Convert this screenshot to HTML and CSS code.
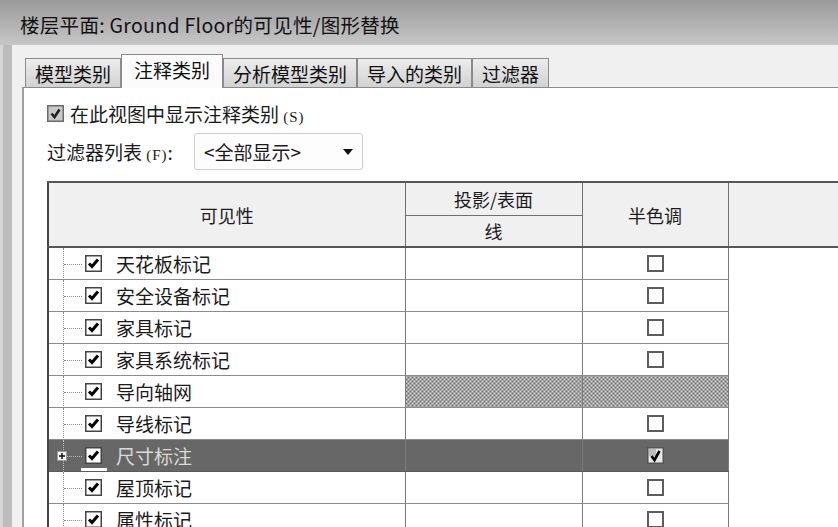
FILE: index.html
```html
<!DOCTYPE html>
<html lang="zh-CN">
<head>
<meta charset="utf-8">
<title>可见性/图形替换</title>
<link rel="stylesheet" href="styles.css">
</head>
<body>
<div class="window">
  <div class="titlebar">楼层平面: Ground Floor的可见性/图形替换</div>
  <div class="frame">
    <div class="frame-edge"></div>
    <div class="dialog">
      <div class="tabs">
        <div class="tab">模型类别</div>
        <div class="tab active">注释类别</div>
        <div class="tab">分析模型类别</div>
        <div class="tab">导入的类别</div>
        <div class="tab">过滤器</div>
      </div>
      <div class="panel">
        <div class="showrow">
          <svg class="cb" viewBox="0 0 17 17"><rect x="0.75" y="0.75" width="15.5" height="15.5" fill="#c9c9c9" stroke="#6a6a6a" stroke-width="1.5"/><path d="M4.5 8.5 L7.5 12 L12.5 4.5" fill="none" stroke="#222" stroke-width="2.6"/></svg>
          <span>在此视图中显示注释类别 <span class="acc">(S)</span></span>
        </div>
        <div class="filterrow">
          <span>过滤器列表 <span class="acc">(F)</span>:</span>
          <div class="select">
            <span>&lt;全部显示&gt;</span>
            <svg class="arrow" viewBox="0 0 10 6"><path d="M0 0 H10 L5 6 Z" fill="#111"/></svg>
          </div>
        </div>
        <table class="vg">
          <colgroup><col class="c-name"><col class="c-line"><col class="c-half"><col class="c-rest"></colgroup>
          <thead>
            <tr class="h1"><th rowspan="2">可见性</th><th>投影/表面</th><th rowspan="2">半色调</th><th rowspan="2" class="rest"></th></tr>
            <tr class="h2"><th>线</th></tr>
          </thead>
          <tbody>
            <tr><td><div class="item"><span class="tree"></span><svg class="cb" viewBox="0 0 17 17"><rect x="0.75" y="0.75" width="15.5" height="15.5" fill="#fff" stroke="#444" stroke-width="1.5"/><path d="M4 8.5 L7 11.5 L13 4.5" fill="none" stroke="#000" stroke-width="3"/></svg><span class="label">天花板标记</span></div></td><td></td><td class="half"><span class="box"></span></td><td class="rest"></td></tr>
            <tr><td><div class="item"><span class="tree"></span><svg class="cb" viewBox="0 0 17 17"><rect x="0.75" y="0.75" width="15.5" height="15.5" fill="#fff" stroke="#444" stroke-width="1.5"/><path d="M4 8.5 L7 11.5 L13 4.5" fill="none" stroke="#000" stroke-width="3"/></svg><span class="label">安全设备标记</span></div></td><td></td><td class="half"><span class="box"></span></td><td class="rest"></td></tr>
            <tr><td><div class="item"><span class="tree"></span><svg class="cb" viewBox="0 0 17 17"><rect x="0.75" y="0.75" width="15.5" height="15.5" fill="#fff" stroke="#444" stroke-width="1.5"/><path d="M4 8.5 L7 11.5 L13 4.5" fill="none" stroke="#000" stroke-width="3"/></svg><span class="label">家具标记</span></div></td><td></td><td class="half"><span class="box"></span></td><td class="rest"></td></tr>
            <tr><td><div class="item"><span class="tree"></span><svg class="cb" viewBox="0 0 17 17"><rect x="0.75" y="0.75" width="15.5" height="15.5" fill="#fff" stroke="#444" stroke-width="1.5"/><path d="M4 8.5 L7 11.5 L13 4.5" fill="none" stroke="#000" stroke-width="3"/></svg><span class="label">家具系统标记</span></div></td><td></td><td class="half"><span class="box"></span></td><td class="rest"></td></tr>
            <tr><td><div class="item"><span class="tree"></span><svg class="cb" viewBox="0 0 17 17"><rect x="0.75" y="0.75" width="15.5" height="15.5" fill="#fff" stroke="#444" stroke-width="1.5"/><path d="M4 8.5 L7 11.5 L13 4.5" fill="none" stroke="#000" stroke-width="3"/></svg><span class="label">导向轴网</span></div></td><td class="hatch"></td><td class="hatch"></td><td class="rest"></td></tr>
            <tr><td><div class="item"><span class="tree"></span><svg class="cb" viewBox="0 0 17 17"><rect x="0.75" y="0.75" width="15.5" height="15.5" fill="#fff" stroke="#444" stroke-width="1.5"/><path d="M4 8.5 L7 11.5 L13 4.5" fill="none" stroke="#000" stroke-width="3"/></svg><span class="label">导线标记</span></div></td><td></td><td class="half"><span class="box"></span></td><td class="rest"></td></tr>
            <tr class="sel"><td><div class="item"><span class="tree"><svg class="plus" viewBox="0 0 10 10"><rect x="0.5" y="0.5" width="9" height="9" fill="#f4f4f4" stroke="#999"/><path d="M2 5 H8 M5 2 V8" stroke="#111" stroke-width="1.5"/></svg></span><svg class="cb" viewBox="0 0 17 17"><rect x="0.75" y="0.75" width="15.5" height="15.5" fill="#fff" stroke="#444" stroke-width="1.5"/><path d="M4 8.5 L7 11.5 L13 4.5" fill="none" stroke="#000" stroke-width="3"/></svg><span class="label">尺寸标注</span><span class="focusbar"></span></div></td><td></td><td class="half"><svg class="cb" viewBox="0 0 17 17"><rect x="0.75" y="0.75" width="15.5" height="15.5" fill="#e6e6e6" stroke="#555" stroke-width="1.5"/><rect x="2" y="2" width="7" height="7" fill="#bdbdbd"/><path d="M4.5 9 L7.5 13 L12.5 4" fill="none" stroke="#000" stroke-width="2.6"/></svg></td><td class="rest"></td></tr>
            <tr><td><div class="item"><span class="tree"></span><svg class="cb" viewBox="0 0 17 17"><rect x="0.75" y="0.75" width="15.5" height="15.5" fill="#fff" stroke="#444" stroke-width="1.5"/><path d="M4 8.5 L7 11.5 L13 4.5" fill="none" stroke="#000" stroke-width="3"/></svg><span class="label">屋顶标记</span></div></td><td></td><td class="half"><span class="box"></span></td><td class="rest"></td></tr>
            <tr><td><div class="item"><span class="tree"></span><svg class="cb" viewBox="0 0 17 17"><rect x="0.75" y="0.75" width="15.5" height="15.5" fill="#fff" stroke="#444" stroke-width="1.5"/><path d="M4 8.5 L7 11.5 L13 4.5" fill="none" stroke="#000" stroke-width="3"/></svg><span class="label">属性标记</span></div></td><td></td><td class="half"><span class="box"></span></td><td class="rest"></td></tr>
          </tbody>
        </table>
      </div>
    </div>
  </div>
</div>
</body>
</html>
```
FILE: styles.css
```css
html, body {
  margin: 0;
  padding: 0;
  width: 838px;
  height: 527px;
  overflow: hidden;
  background: #f0f0f0;
  font-family: "Noto Sans CJK SC", "Noto Sans", sans-serif;
  color: #1a1a1a;
}

.window {
  display: flex;
  flex-direction: column;
  width: 838px;
  height: 527px;
}

.titlebar {
  height: 45px;
  box-sizing: border-box;
  padding: 3px 0 0 20px;
  display: flex;
  align-items: center;
  background: linear-gradient(#9a9a9a, #c6c6c6);
  font-size: 19.5px;
  letter-spacing: 0.3px;
  color: #111;
  white-space: nowrap;
}

.frame {
  flex: 1;
  display: flex;
  min-height: 0;
}

.frame-edge {
  width: 12px;
  flex: none;
  background: linear-gradient(to right, #d6d6d6 0 3px, #bcbcbc 3px);
}

.dialog {
  flex: 1;
  min-width: 0;
  display: flex;
  flex-direction: column;
  padding-left: 10px;
  background: #f0f0f0;
}

.tabs {
  height: 42px;
  flex: none;
  display: flex;
  align-items: flex-end;
  padding-left: 3px;
}

.tab {
  height: 29px;
  box-sizing: border-box;
  padding: 0 9px;
  display: flex;
  align-items: center;
  border: 1px solid #8a8a8a;
  border-bottom: none;
  background: linear-gradient(#ececec, #d2d2d2);
  font-size: 19px;
  color: #111;
  white-space: nowrap;
}

.tab.active {
  position: relative;
  z-index: 1;
  height: 34px;
  margin-bottom: -1px;
  padding: 0 12px 5px;
  background: #fbfbfb;
}

.panel {
  flex: 1;
  min-height: 0;
  overflow: hidden;
  background: #fff;
  border-top: 1px solid #8a8a8a;
  border-left: 2px solid #a0a0a0;
  padding: 13px 0 0 23px;
  font-size: 19px;
}

.showrow {
  height: 24px;
  display: flex;
  align-items: center;
  gap: 6px;
  white-space: nowrap;
}

.acc {
  font-size: 15px;
  letter-spacing: 1px;
  font-family: "Liberation Serif", serif;
}

.cb {
  width: 17px;
  height: 17px;
  flex: none;
  display: block;
}

.filterrow {
  margin-top: 8px;
  display: flex;
  align-items: center;
  gap: 21px;
  white-space: nowrap;
}

.select {
  width: 169px;
  height: 37px;
  box-sizing: border-box;
  border: 1px solid #cdcdcd;
  border-radius: 3px;
  background: #fdfdfd;
  display: flex;
  align-items: center;
  justify-content: space-between;
  padding: 0 9px 0 9px;
}

.arrow {
  width: 10px;
  height: 6px;
  display: block;
}

.vg {
  margin-top: 11px;
  border-collapse: collapse;
  table-layout: fixed;
  width: 832px;
  border-top: 2px solid #555;
  border-left: 2px solid #444;
}

.c-name { width: 357px; }
.c-line { width: 177px; }
.c-half { width: 146px; }
.c-rest { width: 152px; }

.vg th {
  background: #f0f0f0;
  border: 1px solid #707070;
  font-weight: normal;
  font-size: 18px;
  color: #1c1c1c;
  padding: 0;
  text-align: center;
}

.vg thead tr.h1 { height: 33px; }
.vg thead tr.h2 { height: 32px; }
.vg thead tr.h2 th { border-bottom: 2px solid #555; }
.vg thead tr.h1 th[rowspan] { border-bottom: 2px solid #555; }

.vg tbody tr { height: 32px; }

.vg td {
  padding: 0;
  border-bottom: 1px solid #8c8c8c;
  border-right: 1px solid #7c7c7c;
  background: #fff;
}

.vg td.rest {
  border: none;
  background: #fff;
}

.vg th.rest {
  border-right: none;
}

.item {
  position: relative;
  height: 31px;
  display: flex;
  align-items: center;
}

.tree {
  position: relative;
  width: 36px;
  align-self: stretch;
  flex: none;
}

.tree::before {
  content: "";
  position: absolute;
  left: 14px;
  top: 0;
  bottom: -1px;
  border-left: 1px dotted #8a8a8a;
}

.tree::after {
  content: "";
  position: absolute;
  left: 15px;
  width: 18px;
  top: 50%;
  border-top: 1px dotted #8a8a8a;
}

.plus {
  position: absolute;
  z-index: 1;
  left: 8px;
  top: 11px;
  width: 10px;
  height: 10px;
  display: block;
}

.label {
  margin-left: 14px;
  white-space: nowrap;
  color: #1a1a1a;
}

.focusbar {
  position: absolute;
  left: 32px;
  bottom: 0;
  width: 26px;
  height: 3px;
  background: #fff;
}

.half .box,
.half .cb {
  margin: 0 auto;
}

.box {
  display: block;
  width: 17px;
  height: 17px;
  box-sizing: border-box;
  border: 2px solid #5c5c5c;
  background: #fff;
}

.vg td.hatch {
  background: repeating-conic-gradient(#747474 0 25%, #d2d2d2 0 50%) 0 0 / 4px 4px;
}

.vg tr.sel td:not(.rest) {
  background: #676767;
  border-bottom-color: #5a5a5a;
}

.vg tr.sel .label {
  color: #dadada;
}

.vg tr.sel .tree::before,
.vg tr.sel .tree::after {
  border-color: #bdbdbd;
}
```
